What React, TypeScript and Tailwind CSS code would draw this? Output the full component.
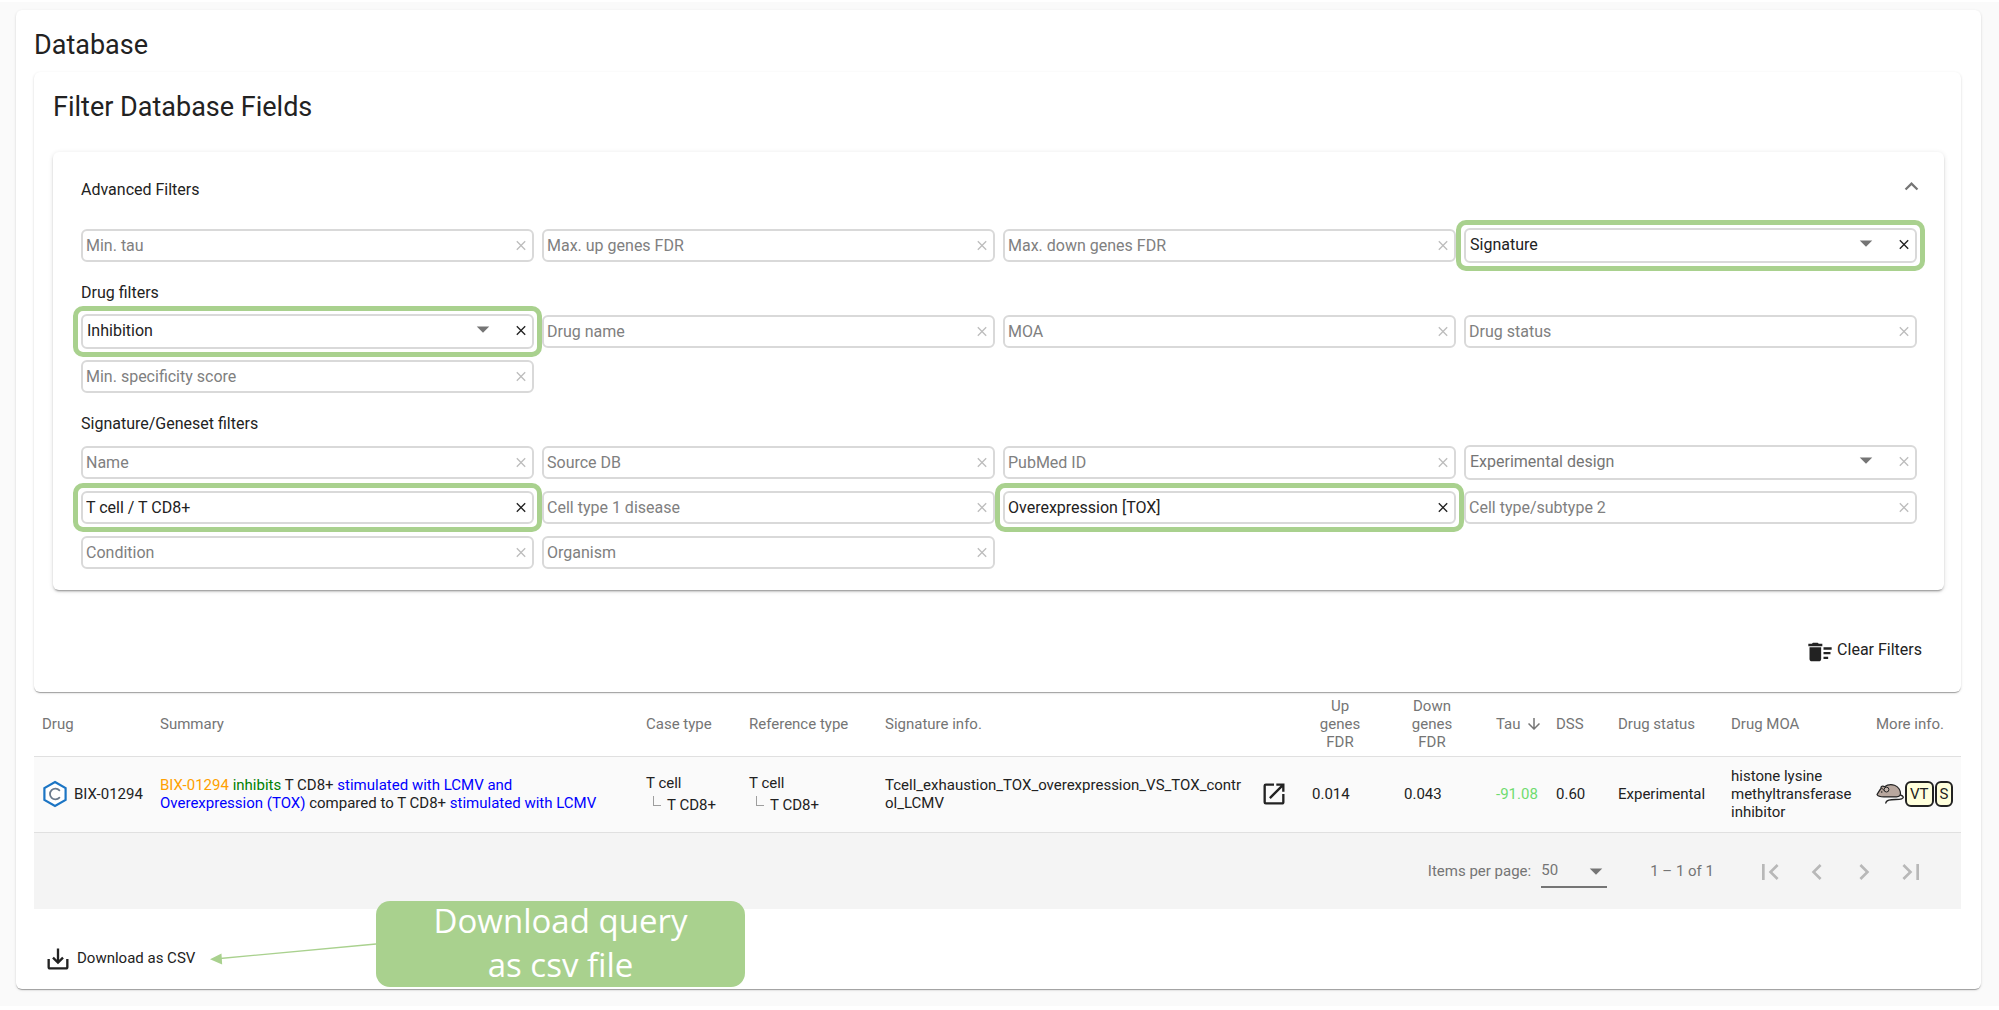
import type { ReactNode } from "react";
import {
  MdArrowDownward,
  MdArrowDropDown,
  MdChevronLeft,
  MdChevronRight,
  MdClose,
  MdDeleteSweep,
  MdExpandLess,
  MdFirstPage,
  MdLastPage,
  MdOpenInNew,
  MdSaveAlt,
} from "react-icons/md";

type Field = {
  label: string;
  value?: string;
  select?: boolean;
  marked?: boolean;
};

const generalFilters: Field[] = [
  { label: "Min. tau" },
  { label: "Max. up genes FDR" },
  { label: "Max. down genes FDR" },
  { label: "Query type", value: "Signature", select: true, marked: true },
];

const drugFilters: Field[] = [
  { label: "Drug effect", value: "Inhibition", select: true, marked: true },
  { label: "Drug name" },
  { label: "MOA" },
  { label: "Drug status" },
  { label: "Min. specificity score" },
];

const signatureFilters: Field[] = [
  { label: "Name" },
  { label: "Source DB" },
  { label: "PubMed ID" },
  { label: "Experimental design", select: true },
  { label: "Cell type/subtype 1", value: "T cell / T CD8+", marked: true },
  { label: "Cell type 1 disease" },
  { label: "Perturbation", value: "Overexpression [TOX]", marked: true },
  { label: "Cell type/subtype 2" },
  { label: "Condition" },
  { label: "Organism" },
];

function FilterField({ label, value, select, marked }: Field) {
  return (
    <div className="relative">
      {select ? (
        <div className="relative">
          <select
            aria-label={label}
            defaultValue={value ?? ""}
            className={
              "block h-[35px] w-full appearance-none rounded-md border-2 border-[#d9d9d9] bg-white pr-16 pb-0.5 pl-1 text-[16px] leading-5 " +
              (value ? "text-[#222222]" : "text-[#757575]")
            }
          >
            {value ? <option>{value}</option> : <option value="">{label}</option>}
          </select>
          <MdArrowDropDown
            size={30}
            className="pointer-events-none absolute top-0 right-9 text-[#757575]"
          />
        </div>
      ) : (
        <input
          type="text"
          aria-label={label}
          placeholder={label}
          defaultValue={value}
          className="block h-[33px] w-full rounded-md border-2 border-[#d9d9d9] bg-white pr-8 pl-[3px] text-[16px] leading-5 text-[#222222] placeholder:text-[#808080]"
        />
      )}
      <button
        type="button"
        aria-label={`Clear ${label}`}
        className={
          "absolute top-0 right-[5px] flex h-8 w-4 items-center justify-center " +
          (value ? "text-[#222222]" : "text-[#bdbdbd]")
        }
      >
        <MdClose size={17} />
      </button>
      {marked && (
        <span className="pointer-events-none absolute -inset-2 z-10 rounded-[10px] border-5 border-[#a9d18e]" />
      )}
    </div>
  );
}

function FilterGrid({ fields }: { fields: Field[] }) {
  return (
    <div className="grid auto-rows-[35px] grid-cols-4 items-center gap-x-2 gap-y-2.5">
      {fields.map((f) => (
        <FilterField key={f.label} {...f} />
      ))}
    </div>
  );
}

function GroupLabel({ children }: { children: ReactNode }) {
  return <h3 className="mt-5 mb-[11px] text-[16px] leading-5">{children}</h3>;
}

function CompoundIcon() {
  return (
    <svg width="26" height="28" viewBox="0 0 26 28" fill="none" className="shrink-0">
      <path d="M13 2 23.6 8.1v11.8L13 26 2.4 19.9V8.1z" stroke="#1c75c4" strokeWidth="2.2" fill="#fff" />
      <path
        d="M17.4 10.4a5.4 5.4 0 1 0 0 7.2"
        stroke="#6b7a8c"
        strokeWidth="1.8"
        strokeLinecap="round"
      />
    </svg>
  );
}

function MouseIcon() {
  return (
    <svg width="28" height="22" viewBox="0 0 28 22" fill="none" className="shrink-0" role="img" aria-label="Mouse">
      <path
        d="M24.500 12c3 .8 3.800 3 1.200 3.800-3.500 1.200-8.600.2-12.800 1.300-1.800.5-2.900 1.200-3.100 2.900"
        stroke="#222"
        strokeWidth="1.300"
        strokeLinecap="round"
      />
      <path
        d="M1 11.500C2.500 9.200 3.600 7 5 5.500 4.600 3.300 6.800 2.400 8.500 3.700 11 2 15 1.200 18.500 2.300c4 1.300 6 5.200 6 8.200 0 2.300-1.700 3.200-4 3.400H8c-3 0-6-.3-7-2.400z"
        fill="#b8a79e"
        stroke="#222"
        strokeWidth="1.200"
        strokeLinejoin="round"
      />
      <circle cx="10.500" cy="6.600" r="2.400" fill="#c4b4ab" stroke="#222" strokeWidth="1" />
      <path d="M5.500 5.500c1.300 0 2 .8 1.900 1.900" stroke="#222" strokeWidth="1" />
      <circle cx="5.700" cy="9" r="0.800" fill="#222" />
    </svg>
  );
}

function CellType() {
  return (
    <div className="leading-[22px]">
      <div>T cell</div>
      <div className="flex pl-[7px]">
        <span className="mt-0.5 mr-1.5 h-2.5 w-2 shrink-0 border-b border-l border-[#9e9e9e]" />
        <span className="whitespace-nowrap">T CD8+</span>
      </div>
    </div>
  );
}

function Badge({ children }: { children: ReactNode }) {
  return (
    <span className="flex h-[26px] items-center rounded-md border-2 border-[#222222] bg-[#ffffdc] px-[3px]">
      {children}
    </span>
  );
}

const pageButtons = [
  { label: "First page", Icon: MdFirstPage },
  { label: "Previous page", Icon: MdChevronLeft },
  { label: "Next page", Icon: MdChevronRight },
  { label: "Last page", Icon: MdLastPage },
];

export default function App() {
  return (
    <div className="min-h-screen bg-white pt-0.5 font-['Roboto','Liberation_Sans',sans-serif] text-[#222222]">
      <div className="bg-[#fafafa] pt-2 pr-[18px] pb-[17px] pl-4">
        <main className="rounded-md bg-white pt-2 pr-5 pb-4 pl-[18px] shadow-[0_2px_1px_-1px_rgba(0,0,0,0.2),0_1px_1px_0_rgba(0,0,0,0.14),0_1px_3px_0_rgba(0,0,0,0.12)]">
          <h1 className="text-[27px] leading-[54px]">Database</h1>

          <section className="rounded-md bg-white pt-4 pr-[17px] pb-[30px] pl-[19px] shadow-[0_2px_1px_-1px_rgba(0,0,0,0.2),0_1px_1px_0_rgba(0,0,0,0.14),0_1px_3px_0_rgba(0,0,0,0.12)]">
            <h2 className="text-[27px] leading-[38px]">Filter Database Fields</h2>

            <div className="mt-[26px] rounded-md bg-white pr-[27px] pb-5 pl-7 shadow-[0_3px_1px_-2px_rgba(0,0,0,0.2),0_2px_2px_0_rgba(0,0,0,0.14),0_1px_5px_0_rgba(0,0,0,0.12)]">
              <button
                type="button"
                aria-expanded="true"
                className="flex h-[76px] w-full items-center justify-between text-[16px]"
              >
                Advanced Filters
                <MdExpandLess size={27} className="-mr-2 mb-2 text-[#757575]" />
              </button>
              <FilterGrid fields={generalFilters} />
              <GroupLabel>Drug filters</GroupLabel>
              <FilterGrid fields={drugFilters} />
              <GroupLabel>Signature/Geneset filters</GroupLabel>
              <FilterGrid fields={signatureFilters} />
            </div>

            <div className="mt-12 flex justify-end pr-[22px]">
              <button type="button" className="flex h-6 items-center gap-[3px] text-[16px] leading-6">
                <MdDeleteSweep size={28} className="mt-1" />
                Clear Filters
              </button>
            </div>
          </section>

          <table className="w-full table-fixed text-left text-[15px] leading-[18px]">
            <colgroup>
              <col className="w-[118px]" />
              <col />
              <col className="w-[103px]" />
              <col className="w-[136px]" />
              <col className="w-[427px]" />
              <col className="w-[92px]" />
              <col className="w-[92px]" />
              <col className="w-[60px]" />
              <col className="w-[62px]" />
              <col className="w-[113px]" />
              <col className="w-[145px]" />
              <col className="w-[93px]" />
            </colgroup>
            <thead>
              <tr className="h-16 border-b border-[#e0e0e0] text-[#757575] [&>th]:pl-2 [&>th]:font-normal">
                <th>Drug</th>
                <th>Summary</th>
                <th>Case type</th>
                <th>Reference type</th>
                <th>Signature info.</th>
                <th className="pr-7 text-center">Up genes FDR</th>
                <th className="pr-7 text-center">Down genes FDR</th>
                <th>
                  <button type="button" className="flex items-center gap-1">
                    Tau
                    <MdArrowDownward size={18} />
                  </button>
                </th>
                <th>DSS</th>
                <th>Drug status</th>
                <th>Drug MOA</th>
                <th>More info.</th>
              </tr>
            </thead>
            <tbody>
              <tr className="h-[76px] border-b border-[#e0e0e0] bg-[#fafafa] [&>td]:pl-2">
                <td>
                  <div className="flex items-center gap-1.5 whitespace-nowrap">
                    <CompoundIcon />
                    BIX-01294
                  </div>
                </td>
                <td className="pr-4">
                  <span className="text-[#ffa000]">BIX-01294</span>{" "}
                  <span className="text-[#008000]">inhibits</span> T CD8+{" "}
                  <span className="text-[#0000ff]">
                    stimulated with LCMV and
                    <br />
                    Overexpression (TOX)
                  </span>{" "}
                  compared to T CD8+{" "}
                  <span className="text-[#0000ff]">stimulated with LCMV</span>
                </td>
                <td>
                  <CellType />
                </td>
                <td>
                  <CellType />
                </td>
                <td className="pr-4">
                  <div className="flex items-center justify-between">
                    <span className="w-[362px] break-all">
                      Tcell_exhaustion_TOX_overexpression_VS_TOX_control_LCMV
                    </span>
                    <a href="#signature" aria-label="Open signature">
                      <MdOpenInNew size={28} />
                    </a>
                  </div>
                </td>
                <td>0.014</td>
                <td>0.043</td>
                <td className="text-[#6fdc6f]">-91.08</td>
                <td>0.60</td>
                <td>Experimental</td>
                <td>histone lysine methyltransferase inhibitor</td>
                <td>
                  <div className="flex items-center gap-px">
                    <MouseIcon />
                    <Badge>VT</Badge>
                    <Badge>S</Badge>
                  </div>
                </td>
              </tr>
            </tbody>
          </table>

          <div className="flex h-[76px] items-center justify-end bg-[#f4f4f4] pt-0.5 pr-[27px] text-[15px] text-[#757575]">
            <label htmlFor="page-size" className="mr-2.5">
              Items per page:
            </label>
            <div className="relative">
              <select
                id="page-size"
                defaultValue="50"
                className="block h-8 w-[66px] appearance-none border-b-2 border-[#757575]"
              >
                <option>50</option>
              </select>
              <MdArrowDropDown
                size={30}
                className="pointer-events-none absolute top-0 -right-1 text-[#757575]"
              />
            </div>
            <span className="mr-8 ml-[43px]">1 – 1 of 1</span>
            {pageButtons.map(({ label, Icon }) => (
              <button
                key={label}
                type="button"
                disabled
                aria-label={label}
                className="flex w-[47px] justify-center text-[#b8b8b8]"
              >
                <Icon size={32} />
              </button>
            ))}
          </div>

          <div className="relative mt-9 pl-2.5">
            <button type="button" className="flex h-7 items-center gap-[5px] text-[15px]">
              <MdSaveAlt size={28} />
              Download as CSV
            </button>
            <svg
              width="168"
              height="26"
              viewBox="0 0 168 26"
              className="absolute -top-1 left-[176px]"
              aria-hidden="true"
            >
              <path d="M166 3 10 17.500" stroke="#a9d18e" strokeWidth="1.300" />
              <path d="M0 18.300 11.500 12.500 12.200 23.500z" fill="#a9d18e" />
            </svg>
            <div className="absolute -top-11 left-[342px] flex h-[86px] w-[369px] items-center justify-center rounded-[14px] bg-[#a9d18e] pb-0.5 text-center font-['Open_Sans','Noto_Sans',sans-serif] text-[33px] leading-[44px] text-white">
              Download query
              <br />
              as csv file
            </div>
          </div>
        </main>
      </div>
    </div>
  );
}
